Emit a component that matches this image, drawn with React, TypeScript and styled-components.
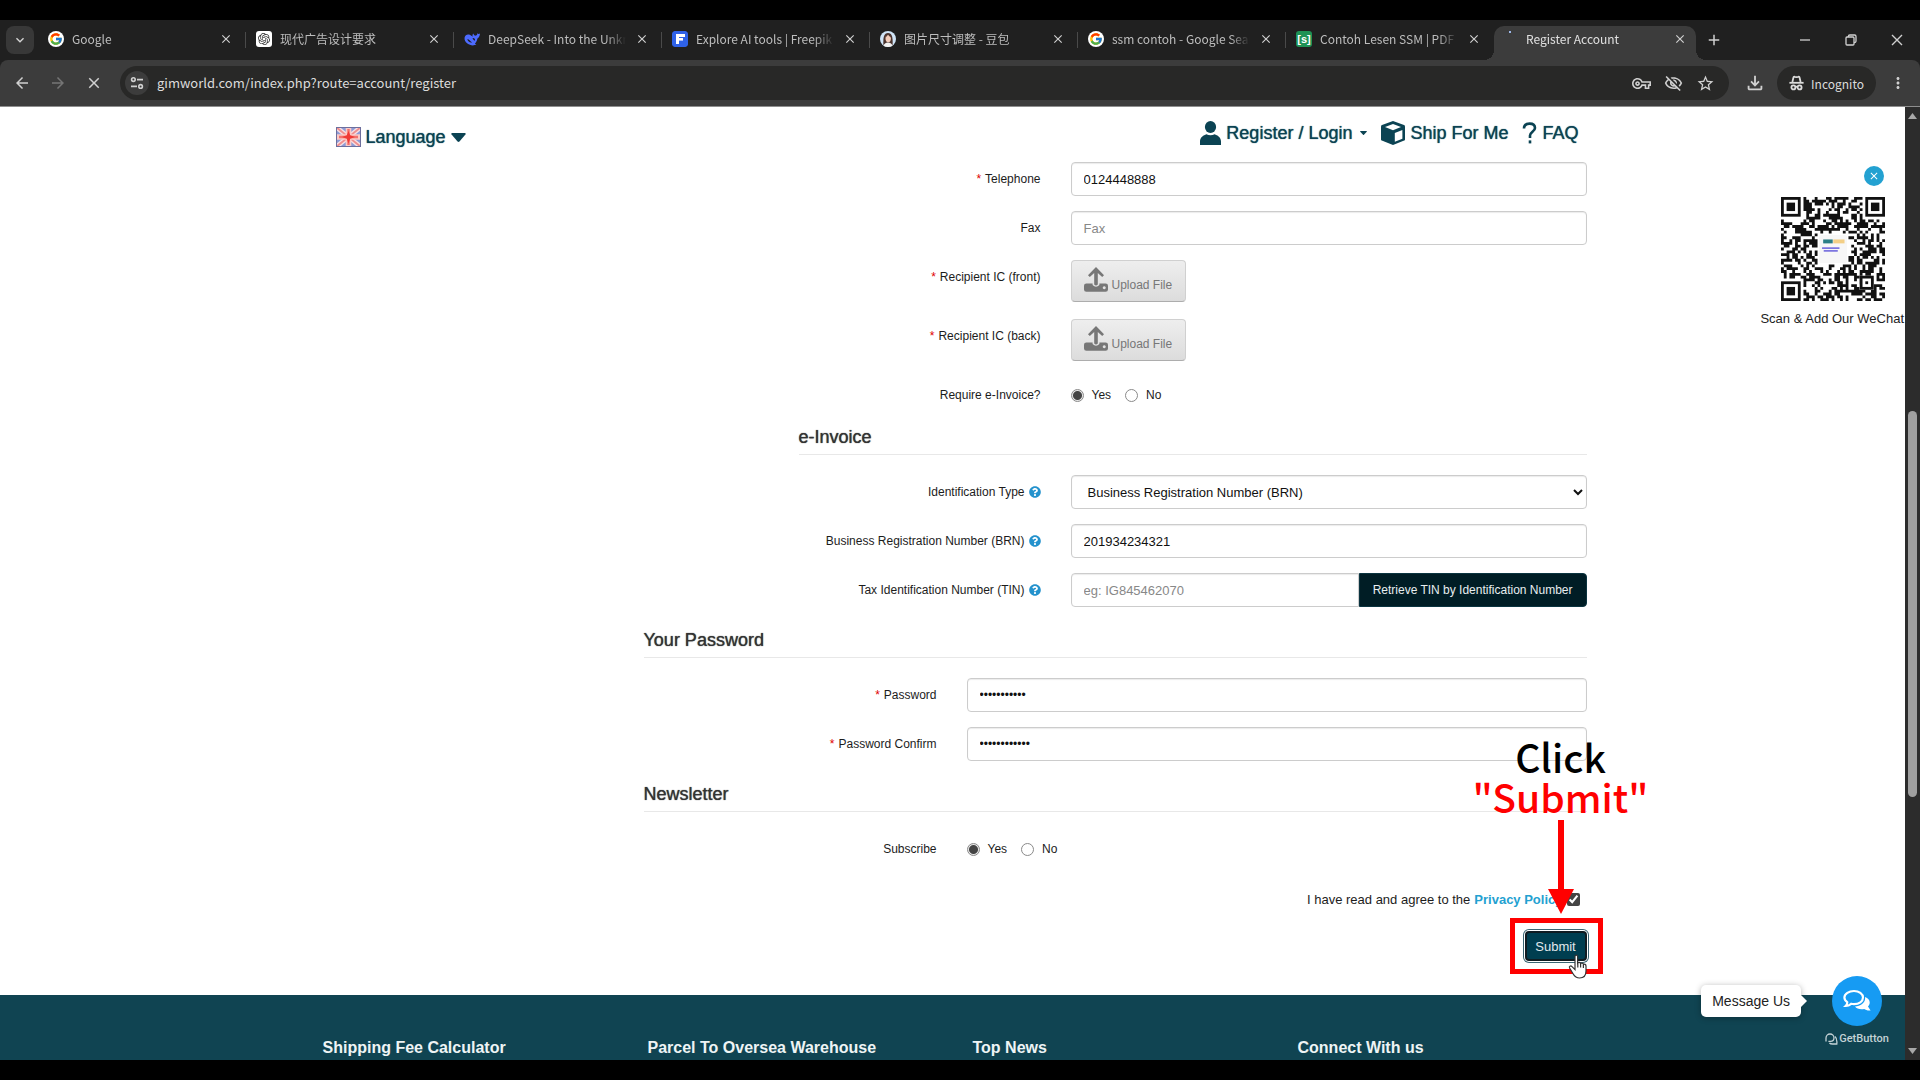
import React, { useId } from "react";
import styled, { createGlobalStyle, css } from "styled-components";
import {
  MdAdd,
  MdArrowBack,
  MdArrowForward,
  MdClose,
  MdKeyboardArrowDown,
  MdMoreVert,
  MdOutlineFileDownload,
  MdOutlineVisibilityOff,
  MdOutlineVpnKey,
  MdStarBorder,
} from "react-icons/md";
import { FcGoogle } from "react-icons/fc";
import { SiOpenai } from "react-icons/si";
import { FaQuestionCircle } from "react-icons/fa";

const color = {
  strip: "#202020",
  toolbar: "#3c3c3c",
  field: "#282827",
  navy: "#0b4353",
  footer: "#104452",
  blue: "#23a1d1",
  line: "#e8e8e8",
  border: "#cccccc",
  red: "#ff0000",
};

const sans = `"Liberation Sans", Arial, sans-serif`;
const ui = `"Noto Sans CJK SC", "Noto Sans", sans-serif`;

const GlobalStyle = createGlobalStyle`
  *, *::before, *::after { box-sizing: border-box; }
  body { margin: 0; background: #000; font-family: ${sans}; }
  button, input, select { font-family: inherit; margin: 0; }
`;

/* ---------- browser frame ---------- */

const Screen = styled.div`
  display: flex;
  flex-direction: column;
  height: 100vh;
  padding: 20px 0;
  background: #000;
  overflow: hidden;
`;

const TabStrip = styled.div`
  display: flex;
  align-items: flex-end;
  height: 40px;
  flex: none;
  padding-left: 6px;
  background: ${color.strip};
  font-family: ${ui};
`;

const TabSearch = styled.button`
  display: flex;
  align-items: center;
  justify-content: center;
  align-self: center;
  width: 28px;
  height: 28px;
  margin-right: 4px;
  padding: 0;
  border: 0;
  border-radius: 8px;
  background: #383838;
  color: #d5d5d5;
`;

const Tab = styled.div<{ $active?: boolean; $divider?: boolean }>`
  position: relative;
  display: flex;
  align-items: center;
  flex: 0 1 ${(p) => (p.$active ? "202px" : "208px")};
  min-width: 0;
  height: 34px;
  padding: 0 12px 8px 10px;
  gap: 8px;
  color: ${(p) => (p.$active ? "#e0e0e0" : "#bdbdbd")};
  ${(p) =>
    p.$active &&
    css`
      padding-right: 8px;
      border-radius: 10px 10px 0 0;
      background: ${color.toolbar};
      &::before,
      &::after {
        content: "";
        position: absolute;
        bottom: 0;
        width: 10px;
        height: 10px;
      }
      &::before {
        left: -10px;
        background: radial-gradient(circle at 0 0, transparent 10px, ${color.toolbar} 10px);
      }
      &::after {
        right: -10px;
        background: radial-gradient(circle at 100% 0, transparent 10px, ${color.toolbar} 10px);
      }
    `}
  ${(p) =>
    p.$divider &&
    css`
      &::after {
        content: "";
        position: absolute;
        right: 0;
        top: 6px;
        width: 1px;
        height: 16px;
        background: #4a4a4a;
      }
    `}
`;

const TabTitle = styled.span`
  flex: 1;
  min-width: 0;
  overflow: hidden;
  white-space: nowrap;
  font-size: 12px;
  line-height: 16px;
  mask-image: linear-gradient(to right, #000 calc(100% - 20px), transparent);
`;

const IconButton = styled.button<{ $size: number; $dim?: boolean }>`
  display: flex;
  align-items: center;
  justify-content: center;
  flex: none;
  width: ${(p) => p.$size}px;
  height: ${(p) => p.$size}px;
  padding: 0;
  border: 0;
  background: none;
  color: ${(p) => (p.$dim ? "#757575" : "#d0d0d0")};
`;

const Favicon = styled.span<{ $bg?: string; $round?: boolean }>`
  display: flex;
  align-items: center;
  justify-content: center;
  flex: none;
  width: 16px;
  height: 16px;
  overflow: hidden;
  border-radius: ${(p) => (p.$round ? "8px" : "3px")};
  background: ${(p) => p.$bg ?? "transparent"};
  color: #fff;
  font: bold 11px/16px ${sans};
`;

const NewTab = styled.div`
  align-self: center;
  margin-left: 8px;
`;

const WindowControls = styled.div`
  display: flex;
  align-self: center;
  gap: 22px;
  margin-left: auto;
  padding-right: 11px;
`;

const Toolbar = styled.div`
  display: flex;
  align-items: center;
  height: 47px;
  flex: none;
  padding: 0 10px;
  border-bottom: 1px solid #8e8e8e;
  border-radius: 8px 8px 0 0;
  background: ${color.toolbar};
  font-family: ${ui};
  color: #d8d8d8;
`;

const ToolbarBacking = styled.div`
  flex: none;
  background: ${color.strip};
`;

const NavButtons = styled.div`
  display: flex;
  gap: 12px;
  margin-right: 14px;
`;

const Omnibox = styled.form`
  display: flex;
  align-items: center;
  flex: 1;
  height: 34px;
  padding: 0 12px 0 5px;
  border-radius: 17px;
  background: ${color.field};
`;

const SiteInfo = styled.button`
  display: flex;
  align-items: center;
  justify-content: center;
  width: 24px;
  height: 24px;
  padding: 0;
  border: 0;
  border-radius: 12px;
  background: #3c3c3c;
`;

const Address = styled.input`
  flex: 1;
  min-width: 0;
  margin-left: 8px;
  padding: 0;
  border: 0;
  outline: 0;
  background: none;
  color: #dcdcdc;
  font-size: 13px;
  line-height: 20px;
`;

const OmniboxActions = styled.div`
  display: flex;
  gap: 8px;
`;

const Incognito = styled.button`
  display: flex;
  align-items: center;
  gap: 7px;
  height: 34px;
  margin: 0 10px;
  padding: 0 12px;
  border: 0;
  border-radius: 17px;
  background: ${color.field};
  color: #dcdcdc;
  font-size: 12px;
`;

const DownloadSlot = styled.div`
  margin-left: 14px;
`;

const Viewport = styled.div`
  position: relative;
  display: flex;
  flex: 1;
  min-height: 0;
  overflow: hidden;
  background: #fff;
`;

const ScrollTrack = styled.div`
  display: flex;
  flex-direction: column;
  align-items: center;
  width: 15px;
  flex: none;
  padding: 6px 0;
  background: #2c2c2c;
`;

const ScrollThumb = styled.div`
  width: 9px;
  height: 41%;
  margin: 292px 0 auto;
  border-radius: 5px;
  background: #9f9f9f;
`;

/* ---------- page ---------- */

const Page = styled.div`
  display: flex;
  flex-direction: column;
  flex: 1;
  min-width: 0;
`;

const Container = styled.div`
  width: 100%;
  max-width: 1300px;
  margin: 0 auto;
`;

const Header = styled(Container)`
  display: flex;
  align-items: flex-start;
  justify-content: space-between;
  height: 55px;
  flex: none;
  padding: 0 24px 0 33px;
  color: ${color.navy};
`;

const heavier = css`
  text-shadow: 0 0 1px currentColor;
`;

const LanguageButton = styled.button`
  display: flex;
  align-items: center;
  gap: 5px;
  margin-top: 20px;
  padding: 0;
  border: 0;
  background: none;
  color: inherit;
  font-size: 18px;
  line-height: 20px;
  ${heavier}
`;

const SiteNav = styled.nav`
  display: flex;
  align-items: center;
  gap: 14px;
  margin-top: 12px;
`;

const NavLink = styled.a`
  display: flex;
  align-items: center;
  gap: 5px;
  color: inherit;
  font-size: 18px;
  line-height: 28px;
  text-decoration: none;
  ${heavier}
`;

const NavCaret = styled.span`
  display: flex;
  padding-left: 3px;
`;

const Main = styled(Container)`
  display: grid;
  grid-template-columns: 25% 75%;
`;

const Form = styled.form`
  grid-column: 2;
  display: flex;
  flex-direction: column;
  gap: 23px;
  padding: 0 16px;
`;

const Section = styled.section<{ $indent?: boolean }>`
  display: flex;
  flex-direction: column;
  gap: 15px;
  margin-left: ${(p) => (p.$indent ? "155px" : "0")};
`;

const Legend = styled.h2`
  margin: 0 0 5px;
  padding-bottom: 7px;
  border-bottom: 1px solid ${color.line};
  color: #333;
  font-size: 18px;
  font-weight: normal;
  line-height: 20px;
  ${heavier}
`;

const Row = styled.div<{ $label: number }>`
  display: grid;
  grid-template-columns: ${(p) => p.$label}px 1fr;
  column-gap: 30px;
  align-items: start;
`;

const RowLabel = styled.label<{ $required?: boolean }>`
  display: flex;
  align-items: center;
  justify-content: flex-end;
  gap: 4px;
  height: 34px;
  color: #1c1c1c;
  font-size: 12px;
  ${(p) =>
    p.$required &&
    css`
      &::before {
        content: "*";
        color: #e00000;
      }
    `}
`;

const field = css`
  width: 100%;
  height: 34px;
  padding: 0 12px;
  border: 1px solid ${color.border};
  border-radius: 4px;
  outline: 0;
  background: #fff;
  box-shadow: inset 0 1px 1px rgba(0, 0, 0, 0.08);
  color: #111;
  font-size: 13px;
  &::placeholder {
    color: #888;
  }
  &[type="password"] {
    font-size: 12px;
  }
`;

const TextInput = styled.input`
  ${field}
`;

const Select = styled.select`
  ${field}
  padding: 0 0 0 12px;
`;

const InputGroup = styled.div`
  display: flex;
  & > input {
    flex: 1;
    min-width: 0;
    border-radius: 4px 0 0 4px;
  }
`;

const AddonButton = styled.button`
  height: 34px;
  padding: 0 13px;
  border: 1px solid #0b3440;
  border-radius: 0 4px 4px 0;
  background: #001d25;
  color: #e8eef0;
  font-size: 12px;
`;

const UploadRow = styled(Row)`
  min-height: 44px;
`;

const UploadButton = styled.button`
  display: inline-flex;
  align-items: flex-end;
  justify-self: start;
  gap: 4px;
  height: 42px;
  padding: 0 13px 9px 12px;
  border: 1px solid #d0d0d0;
  border-bottom-color: #adadad;
  border-radius: 4px;
  background: linear-gradient(#eeeeee, #dcdcdc);
  color: #777;
  font-size: 12px;
  line-height: 14px;
`;

const Choices = styled.div`
  display: flex;
  align-items: center;
  gap: 14px;
  height: 34px;
`;

const Choice = styled.label`
  display: flex;
  align-items: center;
  gap: 8px;
  color: #1c1c1c;
  font-size: 12px;
`;

const Radio = styled.input`
  appearance: none;
  width: 13px;
  height: 13px;
  border: 1px solid #8a8a8a;
  border-radius: 7px;
  background: #fff;
  &:checked {
    background: radial-gradient(circle, #444 4px, #e6e6e6 5px);
  }
`;

const Agreement = styled.label`
  display: flex;
  align-items: center;
  justify-content: flex-end;
  height: 20px;
  padding-right: 7px;
  color: #1c1c1c;
  font-size: 13px;
`;

const PolicyLink = styled.a`
  margin: 0 4px;
  color: ${color.blue};
  font-weight: bold;
  text-decoration: none;
`;

const Checkbox = styled.input`
  width: 13px;
  height: 13px;
  accent-color: #444;
`;

const SubmitArea = styled.div`
  position: relative;
  align-self: flex-end;
  margin-top: -3px;
  padding: 2px 0 2px 2px;
`;

const SubmitButton = styled.button`
  display: block;
  width: 62px;
  height: 30px;
  padding: 0;
  border: 2px solid #101c22;
  border-radius: 4px;
  background: #003e50;
  box-shadow: 0 0 0 1px #ffffff, 0 0 0 2px #3a6472;
  color: #e2e9ec;
  font-size: 13px;
`;

const Highlight = styled.div`
  position: absolute;
  inset: -11px -16px -11px -13px;
  border: 5px solid ${color.red};
  pointer-events: none;
`;

const Callout = styled.div`
  position: absolute;
  right: -64px;
  bottom: 49px;
  display: flex;
  flex-direction: column;
  align-items: center;
  width: 180px;
  font: 500 39px/40px ${ui};
  color: #000;
  pointer-events: none;
`;

const CalloutStrong = styled.span`
  color: ${color.red};
`;

const CalloutArrow = styled.svg`
  margin-top: 4px;
`;

const Pointer = styled.span`
  position: absolute;
  right: -1px;
  bottom: -16px;
  height: 25px;
  pointer-events: none;
`;

const Footer = styled.footer`
  flex: 1;
  margin-top: 32px;
  padding-top: 43px;
  background: ${color.footer};
`;

const FooterColumns = styled(Container)`
  display: grid;
  grid-template-columns: repeat(4, 1fr);
`;

const FooterTitle = styled.h5`
  margin: 0;
  padding-left: 20px;
  color: #eef4f5;
  font-size: 16px;
  font-weight: bold;
  line-height: 20px;
`;

/* ---------- floating widgets ---------- */

const WeChatCard = styled.aside`
  position: absolute;
  top: 59px;
  right: 16px;
  display: flex;
  flex-direction: column;
  align-items: flex-end;
  color: #222;
  font-size: 13px;
  line-height: 16px;
`;

const DismissButton = styled.button`
  display: flex;
  align-items: center;
  justify-content: center;
  width: 20px;
  height: 20px;
  margin: 0 20px 11px 0;
  padding: 0;
  border: 0;
  border-radius: 10px;
  background: ${color.blue};
  color: #fff;
`;

const QrBox = styled.div`
  margin: 0 19px 10px 0;
  height: 104px;
`;

const ChatWidget = styled.div`
  position: absolute;
  right: 38px;
  bottom: 12px;
  display: flex;
  align-items: flex-start;
  gap: 31px;
`;

const ChatBubble = styled.div`
  position: relative;
  margin-top: 9px;
  padding: 8px 11px;
  border-radius: 5px;
  background: #fff;
  box-shadow: 0 1px 6px rgba(0, 0, 0, 0.3);
  color: #222;
  font-size: 14px;
  line-height: 16px;
  white-space: nowrap;
  &::after {
    content: "";
    position: absolute;
    left: 100%;
    top: 10px;
    border: 6px solid transparent;
    border-left-color: #fff;
    border-right-width: 0;
  }
`;

const ChatColumn = styled.div`
  display: flex;
  flex-direction: column;
  align-items: center;
  gap: 4px;
  width: 50px;
`;

const ChatButton = styled.button`
  display: flex;
  align-items: center;
  justify-content: center;
  width: 50px;
  height: 50px;
  padding: 0;
  border: 0;
  border-radius: 25px;
  background: #169bf3;
`;

const GetButton = styled.a`
  display: flex;
  align-items: center;
  gap: 1px;
  color: #c4d2d6;
  font: 500 11px/18px Roboto, sans-serif;
  text-decoration: none;
`;

/* ---------- drawings ---------- */

const WhaleIcon = () => (
  <svg width="16" height="16" viewBox="0 0 16 16">
    <path
      d="M.6 6.5C1.2 3.6 3.8 2.8 5.8 3.8C6.8 4.3 7.8 5 8.8 5.8C8.2 4.8 8.4 3.4 9.4 2.6C9.6 4 10.6 4.8 11.8 4.6C13.2 4.4 13.4 3.2 13.2 2.2C14.2 3.2 15.3 3 16 2.4C15.8 4.8 15 6.6 13.4 7.4C13 9.8 12 11.4 10.8 12.4L12.4 13.6C9.6 15 6 14.6 3.4 12.6C1.2 10.8 .2 8.8 .6 6.5Z"
      fill="#4d6bfe"
    />
    <path d="M3.4 8C5 7.8 6 10.4 8.2 11.4C6.2 12 3.6 10.6 3.4 8Z" fill={color.strip} />
    <path d="M8.6 7.2C10 6.8 11.4 8 11 9.6C10.2 9.4 9 8.6 8.6 7.2Z" fill={color.strip} />
  </svg>
);

const FreepikIcon = () => (
  <svg width="16" height="16" viewBox="0 0 16 16">
    <rect width="16" height="16" rx="2.5" fill="#2f62e8" />
    <rect x="4" y="3" width="9" height="3" fill="#fff" />
    <rect x="4" y="7" width="7" height="2.6" fill="#fff" />
    <rect x="4" y="3" width="3" height="10" fill="#fff" />
  </svg>
);

const PortraitIcon = () => (
  <svg width="16" height="16" viewBox="0 0 16 16">
    <rect width="16" height="16" fill="#cfe4f7" />
    <path d="M3.4 14C3 6 4 2 8 2C12 2 13 6 12.6 14Z" fill="#4b342e" />
    <ellipse cx="8.2" cy="7.4" rx="2.7" ry="3.6" fill="#f3cdbb" />
    <path d="M3 16C4 12.4 6 11.4 8 11.4C10 11.4 12 12.4 13 16Z" fill="#f2f2f2" />
    <path d="M5.4 6.6C6.6 5.8 7.6 4.6 8 3.6C8.8 5 10 6 11 6.6L10.6 3.4L6.6 3Z" fill="#4b342e" />
  </svg>
);

const TuneIcon = () => (
  <svg width="14" height="14" viewBox="0 0 14 14" fill="none" stroke="#d0d0d0" strokeWidth="1.6">
    <circle cx="3.4" cy="3.6" r="1.8" />
    <path d="M7 3.6H13M1 10.4H7" />
    <circle cx="10.6" cy="10.4" r="1.8" />
  </svg>
);

const IncognitoIcon = () => (
  <svg width="15" height="16" viewBox="0 0 15 16" fill="none" stroke="#dcdcdc" strokeWidth="1.8">
    <path d="M3.4 7L4.4 2.6C4.6 1.8 5.2 1.6 5.8 1.8L7.5 2.2L9.2 1.8C9.8 1.6 10.4 1.8 10.6 2.6L11.6 7" />
    <path d="M.4 7.8H14.6" />
    <circle cx="4.4" cy="12.4" r="2" />
    <circle cx="10.6" cy="12.4" r="2" />
    <path d="M6.2 12Q7.5 11.2 8.8 12" />
  </svg>
);

const MinimizeIcon = () => (
  <svg width="24" height="24" viewBox="0 0 24 24" stroke="currentColor" strokeWidth="1.3">
    <path d="M7 12H17" />
  </svg>
);

const RestoreIcon = () => (
  <svg width="24" height="24" viewBox="0 0 24 24" fill="none" stroke="currentColor" strokeWidth="1.3">
    <rect x="7" y="9" width="8" height="8" rx="1" />
    <path d="M9.4 9V8.4Q9.4 7 10.8 7H15.6Q17 7 17 8.4V13.2Q17 14.6 15 14.6" />
  </svg>
);

const CloseWindowIcon = () => (
  <svg width="24" height="24" viewBox="0 0 24 24" stroke="currentColor" strokeWidth="1.4">
    <path d="M7 7L17 17M17 7L7 17" />
  </svg>
);

const FlagIcon = () => (
  <svg width="25" height="20" viewBox="0 0 25 20">
    <rect width="25" height="20" fill="#8d9bd6" />
    <path d="M0 0L25 20M25 0L0 20" stroke="#f8dfe2" strokeWidth="4.6" />
    <path d="M0 0L25 20M25 0L0 20" stroke="#f08f8f" strokeWidth="1.8" />
    <path d="M12.5 0V20M0 10H25" stroke="#fbc9c5" strokeWidth="5.6" />
    <path d="M12.5 2V18M3 10H22" stroke="#f2726e" strokeWidth="2.4" />
    <path d="M12.5 4L14.2 8.2L19 10L14.2 11.8L12.5 16.4L10.8 11.8L6 10L10.8 8.2Z" fill="#f03a36" />
    <rect x=".5" y=".5" width="24" height="19" fill="none" stroke="#6d6f9d" />
  </svg>
);

const CaretIcon = ({ width, height }: { width: number; height: number }) => (
  <svg width={width} height={height} viewBox="0 0 16 10" preserveAspectRatio="none" fill="currentColor">
    <path d="M1 0H15Q16 .6 15.4 1.6L9 9.4Q8 10.4 7 9.4L.6 1.6Q0 .6 1 0Z" />
  </svg>
);

const UserIcon = () => (
  <svg width="21" height="24" viewBox="0 0 21 24" fill="currentColor">
    <ellipse cx="10.5" cy="6" rx="5.6" ry="6" />
    <path d="M0 24V20.4C0 16.4 3.6 14 6.4 13.2C8.8 14.6 12.2 14.6 14.6 13.2C17.4 14 21 16.4 21 20.4V24Z" />
  </svg>
);

const CubeIcon = () => (
  <svg width="24" height="24" viewBox="0 0 24 24">
    <path d="M12 0L23 4Q24 4.4 24 5.4V18.4Q24 19.2 23.2 19.6L12 24L.8 19.6Q0 19.2 0 18.4V5.4Q0 4.4 1 4Z" fill="currentColor" />
    <path d="M12 3L20 6L12 9.2L4 6Z" fill="#fff" />
    <path d="M13.8 12L21.4 9V17.8L13.8 20.8Z" fill="#fff" />
  </svg>
);

const QuestionIcon = () => (
  <svg width="15" height="22" viewBox="0 0 15 22" fill="none" stroke="currentColor" strokeWidth="2.6">
    <path d="M2 6.4C2 3 4.4 1.6 7.6 1.6C10.8 1.6 13 3.2 13 6C13 9.6 8 10 8 13.6V16" />
    <path d="M8 18.4V21.4" />
  </svg>
);

const UploadIcon = () => (
  <svg width="24" height="25" viewBox="0 0 24 25" fill="#777">
    <path d="M12 0L20 8.2L18.2 10L13.8 6V17.6Q12 19.4 10.2 17.6V6L5.8 10L4 8.2Z" />
    <path d="M2.4 16.4H8.6V18Q12 21.6 15.4 18V16.4H21.6Q24 16.4 24 18.8V22.4Q24 24.8 21.6 24.8H2.4Q0 24.8 0 22.4V18.8Q0 16.4 2.4 16.4ZM20.2 19.2A1.5 1.5 0 1 0 20.3 19.2Z" />
  </svg>
);

const ChatIcon = () => (
  <svg width="28" height="24" viewBox="0 0 28 24">
    <path
      d="M22 8C26.8 9.4 28.2 14 25 17.4L27.6 21.4C25 21.8 22.6 21 21.2 20C17.4 20.8 13.6 19.8 12 17.6C18 17.4 23 13.4 22 8Z"
      fill="#fff"
    />
    <path
      d="M11 2C16 2 20 4.8 20 8.6C20 12.4 16 15.2 11 15.2C10 15.2 9 15 8.2 14.8C6.6 16.2 4.6 17 2.6 17C3.8 15.8 4.4 14.6 4.2 13.2C2.4 12 1.4 10.4 1.4 8.6C1.4 4.8 6 2 11 2Z"
      fill="#169bf3"
      stroke="#fff"
      strokeWidth="2.2"
    />
  </svg>
);

const GetButtonIcon = () => (
  <svg width="13" height="12" viewBox="0 0 13 12" fill="none" stroke="#c4d2d6" strokeWidth="1.3">
    <path d="M1 8.4V5C1 2.6 2.8 1 5 1C7.4 1 9 2.8 9 4.8C9 7 7.4 8.4 5.4 8.4H3.4" />
    <path d="M10 3.4C12 5 12.2 7 11.8 11H7.6C6.4 11 5.2 10.8 4.4 10" />
  </svg>
);

const HandIcon = () => (
  <svg width="20" height="25" viewBox="0 0 20 25">
    <path
      d="M7 2.4C7 .8 9.6 .8 9.6 2.4V9C10.2 8 12.4 8 12.6 9.6C13.4 8.8 15.2 9 15.4 10.4C16.4 9.8 18 10.4 18 12V17C18 21.4 15.4 24 11.6 24C8 24 6.6 22.4 5.2 20L1.6 14C.8 12.4 2.6 11.2 4 12.6L7 15.6Z"
      fill="#fff"
      stroke="#333"
      strokeWidth="1.2"
    />
    <path d="M9.8 9V13.4M12.6 10V13.6M15.4 11V14" stroke="#333" strokeWidth="1.2" />
  </svg>
);

const QR_SIZE = 37;

const inFinder = (x: number, y: number) =>
  (x < 8 && y < 8) || (x > QR_SIZE - 9 && y < 8) || (x < 8 && y > QR_SIZE - 9);

const qrPath = (() => {
  let seed = 20193;
  let d = "";
  for (let y = 0; y < QR_SIZE; y++) {
    for (let x = 0; x < QR_SIZE; x++) {
      seed = (seed * 1103515245 + 12345) % 2147483648;
      const inLogo = x > 12 && x < 24 && y > 12 && y < 24;
      if (!inFinder(x, y) && !inLogo && seed / 2147483648 > 0.46) d += `M${x} ${y}h1v1h-1z`;
    }
  }
  return d;
})();

const Finder = ({ x, y }: { x: number; y: number }) => (
  <g>
    <rect x={x + 0.5} y={y + 0.5} width="6" height="6" fill="none" stroke="#111" />
    <rect x={x + 2} y={y + 2} width="3" height="3" fill="#111" />
  </g>
);

const QrCode = () => (
  <svg width="104" height="104" viewBox={`0 0 ${QR_SIZE} ${QR_SIZE}`} role="img" aria-label="WeChat QR code">
    <path d={qrPath} fill="#111" />
    <Finder x={0} y={0} />
    <Finder x={QR_SIZE - 7} y={0} />
    <Finder x={0} y={QR_SIZE - 7} />
    <rect x={QR_SIZE - 9} y={QR_SIZE - 9} width="5" height="5" fill="#fff" />
    <rect x={QR_SIZE - 8.5} y={QR_SIZE - 8.5} width="4" height="4" fill="none" stroke="#111" />
    <rect x={QR_SIZE - 7} y={QR_SIZE - 7} width="1" height="1" fill="#111" />
    <rect x="13.5" y="13.5" width="10" height="10" rx="1" fill="#f7f7f7" />
    <path d="M15 15.8H18.4" stroke="#2c7f86" strokeWidth="1.4" />
    <path d="M18.6 15.8H22.6" stroke="#f3cf86" strokeWidth="1.4" />
    <path d="M14.6 18.2H20.8M15.2 19.2H20.2" stroke="#7d76e0" strokeWidth=".6" />
  </svg>
);

/* ---------- composed parts ---------- */

const GoogleMark = () => (
  <Favicon $bg="#fff" $round>
    <FcGoogle size={14} />
  </Favicon>
);

const TABS: { title: string; icon: React.ReactNode }[] = [
  { title: "Google", icon: <GoogleMark /> },
  { title: "现代广告设计要求", icon: <Favicon $bg="#fff"><SiOpenai size={12} color="#333" /></Favicon> },
  { title: "DeepSeek - Into the Unkn", icon: <Favicon><WhaleIcon /></Favicon> },
  { title: "Explore AI tools | Freepik A", icon: <Favicon><FreepikIcon /></Favicon> },
  { title: "图片尺寸调整 - 豆包", icon: <Favicon $round><PortraitIcon /></Favicon> },
  { title: "ssm contoh - Google Sear", icon: <GoogleMark /> },
  { title: "Contoh Lesen SSM | PDF", icon: <Favicon $bg="#1e9255">[s]</Favicon> },
];

const Loading = styled.span`
  width: 2px;
  height: 2px;
  margin: 0 7px 14px 5px;
  background: #9db7e8;
`;

type BrowserTabProps = {
  title: string;
  icon: React.ReactNode;
  active?: boolean;
  divider?: boolean;
};

const BrowserTab = ({ title, icon, active, divider }: BrowserTabProps) => (
  <Tab $active={active} $divider={divider}>
    {icon}
    <TabTitle>{title}</TabTitle>
    <IconButton $size={16} aria-label={`Close ${title}`}>
      <MdClose size={14} />
    </IconButton>
  </Tab>
);

const Help = () => <FaQuestionCircle size={12} color="#2492cd" />;

const WIDE = 242;
const NARROW = 293;

type FieldProps = {
  label: string;
  width: number;
  required?: boolean;
  help?: boolean;
  children: (id: string) => React.ReactNode;
};

const FormField = ({ label, width, required, help, children }: FieldProps) => {
  const id = useId();
  return (
    <Row $label={width}>
      <RowLabel htmlFor={id} $required={required}>
        {label}
        {help && <Help />}
      </RowLabel>
      {children(id)}
    </Row>
  );
};

const UploadField = ({ label }: { label: string }) => {
  const id = useId();
  return (
    <UploadRow $label={WIDE}>
      <RowLabel htmlFor={id} $required>
        {label}
      </RowLabel>
      <UploadButton id={id} type="button">
        <UploadIcon />
        Upload File
      </UploadButton>
    </UploadRow>
  );
};

const YesNo = ({ name, id }: { name: string; id: string }) => (
  <Choices>
    <Choice>
      <Radio id={id} type="radio" name={name} defaultChecked />
      Yes
    </Choice>
    <Choice>
      <Radio type="radio" name={name} />
      No
    </Choice>
  </Choices>
);

export default function App() {
  return (
    <Screen>
      <GlobalStyle />
      <TabStrip>
        <TabSearch aria-label="Search tabs">
          <MdKeyboardArrowDown size={16} />
        </TabSearch>
        {TABS.map((tab, i) => (
          <BrowserTab key={tab.title} {...tab} divider={i < TABS.length - 1} />
        ))}
        <BrowserTab title="Register Account" icon={<Loading />} active />
        <NewTab>
          <IconButton $size={20} aria-label="New tab">
            <MdAdd size={18} />
          </IconButton>
        </NewTab>
        <WindowControls>
          <IconButton $size={24} aria-label="Minimize"><MinimizeIcon /></IconButton>
          <IconButton $size={24} aria-label="Restore"><RestoreIcon /></IconButton>
          <IconButton $size={24} aria-label="Close window"><CloseWindowIcon /></IconButton>
        </WindowControls>
      </TabStrip>

      <ToolbarBacking>
        <Toolbar>
          <NavButtons>
            <IconButton $size={24} aria-label="Back"><MdArrowBack size={18} /></IconButton>
            <IconButton $size={24} $dim aria-label="Forward"><MdArrowForward size={18} /></IconButton>
            <IconButton $size={24} aria-label="Stop"><MdClose size={18} /></IconButton>
          </NavButtons>
          <Omnibox>
            <SiteInfo type="button" aria-label="Site information"><TuneIcon /></SiteInfo>
            <Address aria-label="Address" defaultValue="gimworld.com/index.php?route=account/register" />
            <OmniboxActions>
              <IconButton $size={24} type="button" aria-label="Passwords"><MdOutlineVpnKey size={19} /></IconButton>
              <IconButton $size={24} type="button" aria-label="Third-party cookies blocked"><MdOutlineVisibilityOff size={19} /></IconButton>
              <IconButton $size={24} type="button" aria-label="Bookmark"><MdStarBorder size={19} /></IconButton>
            </OmniboxActions>
          </Omnibox>
          <DownloadSlot>
            <IconButton $size={24} aria-label="Downloads"><MdOutlineFileDownload size={22} /></IconButton>
          </DownloadSlot>
          <Incognito>
            <IncognitoIcon />
            Incognito
          </Incognito>
          <IconButton $size={24} aria-label="Menu"><MdMoreVert size={18} /></IconButton>
        </Toolbar>
      </ToolbarBacking>

      <Viewport>
        <Page>
          <Header as="header">
            <LanguageButton>
              <FlagIcon />
              Language
              <CaretIcon width={15} height={9} />
            </LanguageButton>
            <SiteNav>
              <NavLink href="#account">
                <UserIcon />
                Register / Login
                <NavCaret>
                  <CaretIcon width={7} height={4} />
                </NavCaret>
              </NavLink>
              <NavLink href="#ship">
                <CubeIcon />
                Ship For Me
              </NavLink>
              <NavLink href="#faq">
                <QuestionIcon />
                FAQ
              </NavLink>
            </SiteNav>
          </Header>

          <Main as="main">
            <Form onSubmit={(e) => e.preventDefault()}>
              <Section $indent>
                <FormField label="Telephone" width={WIDE} required>
                  {(id) => <TextInput id={id} defaultValue="0124448888" />}
                </FormField>
                <FormField label="Fax" width={WIDE}>
                  {(id) => <TextInput id={id} placeholder="Fax" />}
                </FormField>
                <UploadField label="Recipient IC (front)" />
                <UploadField label="Recipient IC (back)" />
                <FormField label="Require e-Invoice?" width={WIDE}>
                  {(id) => <YesNo id={id} name="einvoice" />}
                </FormField>
                <Legend>e-Invoice</Legend>
                <FormField label="Identification Type" width={WIDE} help>
                  {(id) => (
                    <Select id={id}>
                      <option>Business Registration Number (BRN)</option>
                    </Select>
                  )}
                </FormField>
                <FormField label="Business Registration Number (BRN)" width={WIDE} help>
                  {(id) => <TextInput id={id} defaultValue="201934234321" />}
                </FormField>
                <FormField label="Tax Identification Number (TIN)" width={WIDE} help>
                  {(id) => (
                    <InputGroup>
                      <TextInput id={id} placeholder="eg: IG845462070" />
                      <AddonButton type="button">Retrieve TIN by Identification Number</AddonButton>
                    </InputGroup>
                  )}
                </FormField>
              </Section>

              <Section>
                <Legend>Your Password</Legend>
                <FormField label="Password" width={NARROW} required>
                  {(id) => <TextInput id={id} type="password" defaultValue="abcdefghijk" />}
                </FormField>
                <FormField label="Password Confirm" width={NARROW} required>
                  {(id) => <TextInput id={id} type="password" defaultValue="abcdefghijkl" />}
                </FormField>
              </Section>

              <Section>
                <Legend>Newsletter</Legend>
                <FormField label="Subscribe" width={NARROW}>
                  {(id) => <YesNo id={id} name="newsletter" />}
                </FormField>
              </Section>

              <Agreement>
                I have read and agree to the
                <PolicyLink href="#privacy">Privacy Policy</PolicyLink>
                <Checkbox type="checkbox" defaultChecked />
              </Agreement>

              <SubmitArea>
                <SubmitButton type="submit">Submit</SubmitButton>
                <Highlight />
                <Callout>
                  <span>Click</span>
                  <CalloutStrong>"Submit"</CalloutStrong>
                  <CalloutArrow width="26" height="94" viewBox="0 0 26 94" fill={color.red}>
                    <path d="M10 0H16V69H26L13 94L0 69H10Z" />
                  </CalloutArrow>
                </Callout>
                <Pointer>
                  <HandIcon />
                </Pointer>
              </SubmitArea>
            </Form>
          </Main>

          <Footer>
            <FooterColumns>
              <FooterTitle>Shipping Fee Calculator</FooterTitle>
              <FooterTitle>Parcel To Oversea Warehouse</FooterTitle>
              <FooterTitle>Top News</FooterTitle>
              <FooterTitle>Connect With us</FooterTitle>
            </FooterColumns>
          </Footer>
        </Page>

        <ScrollTrack>
          <svg width="9" height="6" viewBox="0 0 9 6" fill="#a8a8a8"><path d="M4.5 0L9 6H0Z" /></svg>
          <ScrollThumb />
          <svg width="9" height="6" viewBox="0 0 9 6" fill="#a8a8a8"><path d="M4.5 6L9 0H0Z" /></svg>
        </ScrollTrack>

        <WeChatCard>
          <DismissButton aria-label="Close"><MdClose size={12} /></DismissButton>
          <QrBox><QrCode /></QrBox>
          Scan &amp; Add Our WeChat
        </WeChatCard>

        <ChatWidget>
          <ChatBubble>Message Us</ChatBubble>
          <ChatColumn>
            <ChatButton aria-label="Open chat"><ChatIcon /></ChatButton>
            <GetButton href="#getbutton">
              <GetButtonIcon />
              GetButton
            </GetButton>
          </ChatColumn>
        </ChatWidget>
      </Viewport>
    </Screen>
  );
}
